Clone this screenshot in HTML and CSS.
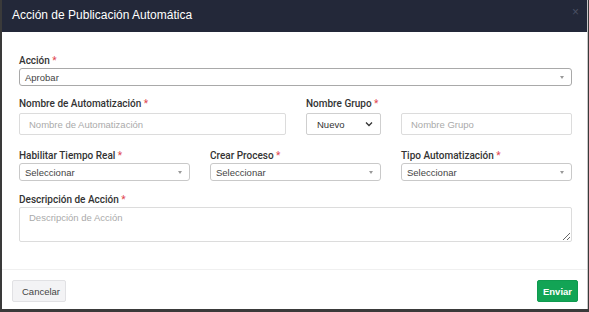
FILE: index.html
```html
<!DOCTYPE html>
<html lang="es">
<head>
<meta charset="utf-8">
<title>Acción de Publicación Automática</title>
<link rel="stylesheet" href="styles.css">
</head>
<body>
<div class="modal">
  <div class="modal-header">
    <span class="modal-title">Acción de Publicación Automática</span>
    <span class="close">×</span>
  </div>
  <div class="modal-body">
    <div class="group g1">
      <label class="lbl">Acción <span class="req">*</span></label>
      <div class="sel sel-dark"><span>Aprobar</span><span class="caret"></span></div>
    </div>
    <div class="row g2">
      <div class="group w-half">
        <label class="lbl">Nombre de Automatización <span class="req">*</span></label>
        <input class="inp" type="text" placeholder="Nombre de Automatización">
      </div>
      <div class="group w-small">
        <label class="lbl">Nombre Grupo <span class="req">*</span></label>
        <div class="native"><span>Nuevo</span>
          <svg class="chev" width="8" height="6" viewBox="0 0 8 6"><path d="M1 1.5 L4 4.5 L7 1.5" fill="none" stroke="#333" stroke-width="1.3"/></svg>
        </div>
      </div>
      <div class="group w-third">
        <label class="lbl lbl-empty">&nbsp;</label>
        <input class="inp" type="text" placeholder="Nombre Grupo">
      </div>
    </div>
    <div class="row g3">
      <div class="group w-third">
        <label class="lbl">Habilitar Tiempo Real <span class="req">*</span></label>
        <div class="sel"><span>Seleccionar</span><span class="caret"></span></div>
      </div>
      <div class="group w-third">
        <label class="lbl">Crear Proceso <span class="req">*</span></label>
        <div class="sel"><span>Seleccionar</span><span class="caret"></span></div>
      </div>
      <div class="group w-third">
        <label class="lbl">Tipo Automatización <span class="req">*</span></label>
        <div class="sel"><span>Seleccionar</span><span class="caret"></span></div>
      </div>
    </div>
    <div class="group g4">
      <label class="lbl">Descripción de Acción <span class="req">*</span></label>
      <textarea class="txt" placeholder="Descripción de Acción"></textarea>
    </div>
  </div>
  <div class="modal-footer">
    <button class="btn btn-cancel">Cancelar</button>
    <button class="btn btn-send">Enviar</button>
  </div>
</div>
</body>
</html>
```
FILE: styles.css
```css
* { box-sizing: border-box; }
html, body { margin: 0; padding: 0; }
body {
  background: #3a3a3a;
  width: 589px;
  height: 312px;
  overflow: hidden;
  font-family: "Liberation Sans", Arial, sans-serif;
}
.modal {
  margin-left: 2px;
  width: 586px;
  height: 309px;
  background: #fff;
  display: flex;
  flex-direction: column;
  border-right: 1px solid #c8c8c8;
}
.modal-header {
  height: 32px;
  flex: none;
  background: #232839;
  display: flex;
  align-items: center;
  justify-content: space-between;
  padding: 0 8px 0 10px;
}
.modal-title {
  color: #fff;
  font-size: 12px;
  margin-top: -3px;
}
.close {
  color: #4a5063;
  font-size: 12px;
  margin-top: -8px;
}
.modal-body {
  flex: 1;
  padding: 23px 15px 0 17px;
}
.group { display: flex; flex-direction: column; }
.row { display: flex; gap: 20px; }
.g2 { margin-top: 12px; }
.g3 { margin-top: 15px; }
.g4 { margin-top: 13px; }
.w-half { width: 267px; }
.w-small { width: 75px; }
.w-third { width: 171px; }
.lbl {
  font-family: Roboto, "Liberation Sans", sans-serif;
  font-size: 10px;
  font-weight: 500;
  color: #333;
  line-height: 12px;
  height: 12px;
  margin-bottom: 1px;
  white-space: nowrap;
}
.g2 .lbl { margin-bottom: 3px; }
.req { color: #e0464e; font-weight: normal; }
.sel {
  height: 18px;
  border: 1px solid #c9c9c9;
  border-radius: 3px;
  display: flex;
  align-items: center;
  justify-content: space-between;
  padding: 0 7px 0 5px;
  font-size: 9.5px;
  color: #444;
}
.sel-dark { border-color: #a9a9a9; }
.caret {
  width: 0;
  height: 0;
  border-left: 2.5px solid transparent;
  border-right: 2.5px solid transparent;
  border-top: 3px solid #999;
}
.inp {
  height: 22px;
  border: 1px solid #dcdcdc;
  border-radius: 2px;
  padding: 0 9px;
  font-family: inherit;
  font-size: 9.5px;
  color: #444;
  outline: none;
  margin: 0;
}
.inp::placeholder, .txt::placeholder { color: #aaa; }
.native {
  height: 22px;
  border: 1px solid #cfcfcf;
  border-radius: 2px;
  display: flex;
  align-items: center;
  justify-content: space-between;
  padding: 0 7px 0 10px;
  font-size: 9.5px;
  color: #333;
}
.txt {
  height: 35px;
  border: 1px solid #dcdcdc;
  border-radius: 2px;
  padding: 4px 9px;
  font-family: inherit;
  font-size: 9.5px;
  resize: vertical;
  margin: 0;
  outline: none;
}
.modal-footer {
  flex: none;
  height: 40px;
  border-top: 1px solid #f0f0f0;
  display: flex;
  justify-content: space-between;
  align-items: flex-start;
  padding: 10px 9px 0 10px;
}
.btn {
  height: 22px;
  font-family: inherit;
  font-size: 9.5px;
  border-radius: 2px;
  padding: 0 9px;
  cursor: pointer;
}
.btn-cancel {
  background: #f3f3f5;
  border: 1px solid #e1e1e4;
  color: #444;
  width: 54px;
}
.btn-send {
  background: #12a455;
  border: 1px solid #0f9a4f;
  color: #fff;
  font-weight: bold;
  width: 41px;
  padding: 0;
}
```
